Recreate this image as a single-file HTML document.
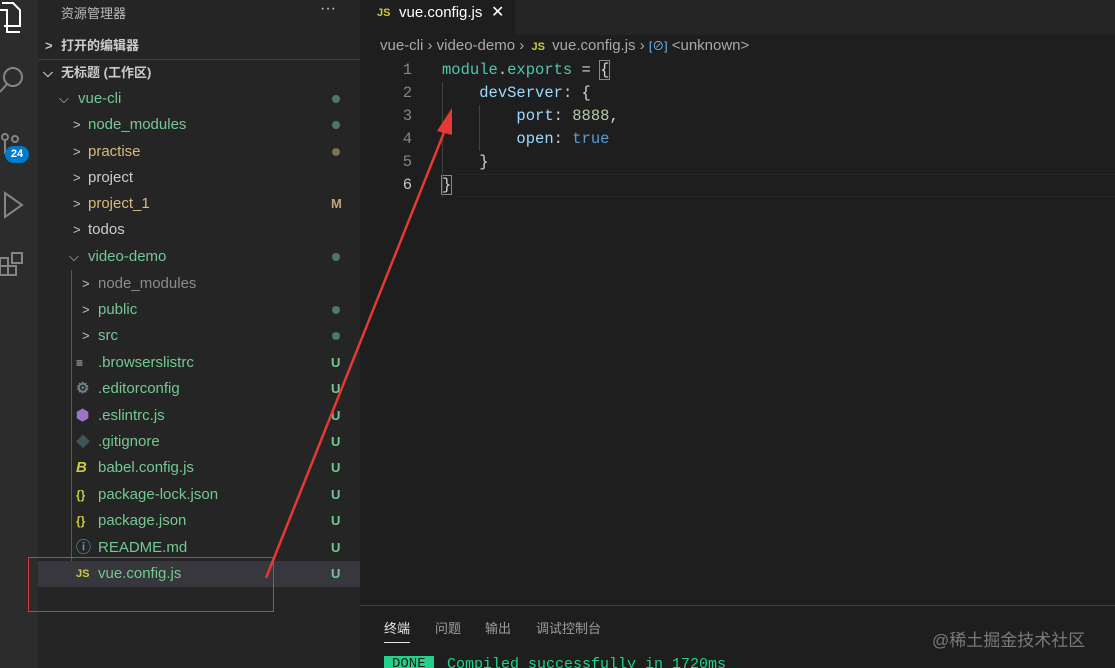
<!DOCTYPE html><html><head><meta charset="utf-8"><style>
*{margin:0;padding:0;box-sizing:border-box}
html,body{width:1115px;height:668px;overflow:hidden}
body{background:#1e1e1e;font-family:"Liberation Sans","Noto Sans CJK SC",sans-serif;position:relative}
.act{position:absolute;left:0;top:0;width:38px;height:668px;background:#2c2c2c}
.side{position:absolute;left:38px;top:0;width:322px;height:668px;background:#252526;color:#ccc}
.row{position:absolute;left:0;width:322px;height:26px;font-size:15px;line-height:26px;white-space:nowrap}
.row span.n{position:absolute}
.chev{position:absolute;font-size:13px;color:#c5c5c5}
.g{color:#73c991}.y{color:#d7ba7d}.w{color:#ccc}.gr{color:#8c8c8c}
.dot{position:absolute;left:294px;top:9px;width:8px;height:8px;border-radius:50%;background:#4b7a5f}
.st{position:absolute;left:293px;font-size:13px;font-weight:bold;color:#73c991}
.ic{position:absolute;left:38px;font-size:12px;font-weight:bold}
.tabs{position:absolute;left:360px;top:0;width:755px;height:35px;background:#252526}
.tab{position:absolute;left:0;top:0;width:155px;height:35px;background:#1e1e1e;color:#fff;font-size:15px;line-height:26px}
.code{position:absolute;left:360px;top:59px;font-family:"Liberation Mono",monospace;font-size:15.5px;line-height:23px}
.ln{position:absolute;left:36px;width:16px;color:#858585;text-align:right}
.cl{position:absolute;left:82px;white-space:pre;color:#d4d4d4}
.panel{position:absolute;left:360px;top:605px;width:755px;height:63px;border-top:1px solid #414141;background:#1e1e1e;overflow:hidden}
</style></head><body>
<div class="act">
<svg width="38" height="300" style="position:absolute;left:0;top:0" fill="none" stroke-width="2">
<path d="M2 3h11l7 7v16h-16" stroke="#fff"/><path d="M0 10h7v22h13" stroke="#fff"/>
<circle cx="13" cy="77" r="9" stroke="#858585"/><path d="M7 84l-7 8" stroke="#858585"/>
<circle cx="5" cy="137" r="3" stroke="#858585"/><circle cx="15" cy="139" r="3" stroke="#858585"/><path d="M5 140v14" stroke="#858585"/>
<path d="M5 193l17 12-17 12z" stroke="#858585"/>
<path d="M0 258h8v8h-8zM0 266h8v9h-8zM8 266h8v9h-8zM12 253h10v10h-10z" stroke="#858585"/>
</svg>
<div style="position:absolute;left:5px;top:146px;width:24px;height:17px;border-radius:9px;background:#007acc;color:#fff;font-size:11px;font-weight:bold;text-align:center;line-height:17px">24</div>
</div>
<div class="side">
<div style="position:absolute;left:23px;top:3px;font-size:13px;color:#bbb">资源管理器</div>
<div style="position:absolute;left:282px;top:0;font-size:16px;color:#ccc">···</div>
<div class="row" style="top:33px;font-weight:bold;font-size:13px"><span class="chev" style="left:7px">&gt;</span><span class="n" style="left:23px">打开的编辑器</span></div>
<div style="position:absolute;left:0;top:59px;width:322px;height:1px;background:#3c3c3c"></div>
<div class="row" style="top:60px;font-weight:bold;font-size:13px"><span class="chev" style="left:5px">⌵</span><span class="n" style="left:23px">无标题 (工作区)</span></div>
<div class="row" style="top:86px"><span class="chev" style="left:21px">⌵</span><span class="n g" style="left:40px">vue-cli</span><i class="dot"></i></div>
<div class="row" style="top:112px"><span class="chev" style="left:35px">&gt;</span><span class="n g" style="left:50px">node_modules</span><i class="dot"></i></div>
<div class="row" style="top:139px"><span class="chev" style="left:35px">&gt;</span><span class="n y" style="left:50px">practise</span><i class="dot" style="background:#7d6f52"></i></div>
<div class="row" style="top:165px"><span class="chev" style="left:35px">&gt;</span><span class="n w" style="left:50px">project</span></div>
<div class="row" style="top:191px"><span class="chev" style="left:35px">&gt;</span><span class="n y" style="left:50px">project_1</span><span class="st" style="color:#c0a57a">M</span></div>
<div class="row" style="top:217px"><span class="chev" style="left:35px">&gt;</span><span class="n w" style="left:50px">todos</span></div>
<div class="row" style="top:244px"><span class="chev" style="left:31px">⌵</span><span class="n g" style="left:50px">video-demo</span><i class="dot"></i></div>
<div style="position:absolute;left:33px;top:270px;width:1px;height:317px;background:#585858"></div>
<div class="row" style="top:271px"><span class="chev" style="left:44px">&gt;</span><span class="n gr" style="left:60px">node_modules</span></div>
<div class="row" style="top:297px"><span class="chev" style="left:44px">&gt;</span><span class="n g" style="left:60px">public</span><i class="dot"></i></div>
<div class="row" style="top:323px"><span class="chev" style="left:44px">&gt;</span><span class="n g" style="left:60px">src</span><i class="dot"></i></div>
<div class="row" style="top:350px"><span class="ic" style="color:#ccc">≡</span><span class="n g" style="left:60px">.browserslistrc</span><span class="st">U</span></div>
<div class="row" style="top:376px"><span class="ic" style="color:#6d8086;font-size:15px">⚙</span><span class="n g" style="left:60px">.editorconfig</span><span class="st">U</span></div>
<div class="row" style="top:403px"><span class="ic" style="color:#a074c4;font-size:15px">⬢</span><span class="n g" style="left:60px">.eslintrc.js</span><span class="st">U</span></div>
<div class="row" style="top:429px"><span class="ic" style="color:#41535b;font-size:14px">◆</span><span class="n g" style="left:60px">.gitignore</span><span class="st">U</span></div>
<div class="row" style="top:455px"><span class="ic" style="color:#cbcb41;font-style:italic;font-size:15px">B</span><span class="n g" style="left:60px">babel.config.js</span><span class="st">U</span></div>
<div class="row" style="top:482px"><span class="ic" style="color:#cbcb41">{}</span><span class="n g" style="left:60px">package-lock.json</span><span class="st">U</span></div>
<div class="row" style="top:508px"><span class="ic" style="color:#cbcb41">{}</span><span class="n g" style="left:60px">package.json</span><span class="st">U</span></div>
<div class="row" style="top:535px"><span class="ic" style="color:#519aba;font-size:15px">ⓘ</span><span class="n g" style="left:60px">README.md</span><span class="st">U</span></div>
<div class="row" style="top:561px;background:#37373d"><span class="ic" style="color:#cbcb41;font-size:11px">JS</span><span class="n g" style="left:60px">vue.config.js</span><span class="st">U</span></div>
</div>
<div class="tabs"><div class="tab"><span style="position:absolute;left:17px;color:#cbcb41;font-size:11px;font-weight:bold">JS</span><span style="position:absolute;left:39px">vue.config.js</span><span style="position:absolute;left:131px;font-size:16px">✕</span></div></div>
<div style="position:absolute;left:380px;top:37px;font-size:15px;color:#a9a9a9;white-space:nowrap">vue-cli <span>›</span> video-demo <span>›</span> <span style="color:#cbcb41;font-size:11px;font-weight:bold">&nbsp;JS&nbsp;</span> vue.config.js › <span style="color:#75beff;font-size:12px">[⊘]</span> &lt;unknown&gt;</div>
<div class="code">
<div class="ln" style="top:0">1</div><div class="ln" style="top:23px">2</div><div class="ln" style="top:46px">3</div><div class="ln" style="top:69px">4</div><div class="ln" style="top:92px">5</div><div class="ln" style="top:115px;color:#c6c6c6">6</div>
<div class="cl" style="top:0"><span style="color:#4ec9b0">module</span>.<span style="color:#4ec9b0">exports</span> = <span style="outline:1px solid #888">{</span></div>
<div class="cl" style="top:23px">    <span style="color:#9cdcfe">devServer</span>: {</div>
<div class="cl" style="top:46px">        <span style="color:#9cdcfe">port</span>: <span style="color:#b5cea8">8888</span>,</div>
<div class="cl" style="top:69px">        <span style="color:#9cdcfe">open</span>: <span style="color:#569cd6">true</span></div>
<div class="cl" style="top:92px">    }</div>
<div class="cl" style="top:115px"><span style="outline:1px solid #888">}</span></div>
<div style="position:absolute;left:82px;top:23px;width:1px;height:115px;background:#404040"></div>
<div style="position:absolute;left:119px;top:46px;width:1px;height:46px;background:#404040"></div>
<div style="position:absolute;left:97px;top:115px;width:660px;height:23px;border-top:1px solid #282828;border-bottom:1px solid #282828"></div>
</div>
<div class="panel">
<div style="position:absolute;left:24px;top:12px;font-size:13px;color:#e7e7e7">终端</div>
<div style="position:absolute;left:24px;top:36px;width:26px;height:1px;background:#e7e7e7"></div>
<div style="position:absolute;left:75px;top:12px;font-size:13px;color:#9d9d9d">问题</div>
<div style="position:absolute;left:125px;top:12px;font-size:13px;color:#9d9d9d">输出</div>
<div style="position:absolute;left:176px;top:12px;font-size:13px;color:#9d9d9d">调试控制台</div>
<div style="position:absolute;left:572px;top:20px;font-size:17px;color:#7a7a7a">@稀土掘金技术社区</div>
<div style="position:absolute;left:24px;top:50px;width:50px;height:20px;background:#23d18b;color:#1e1e1e;font-family:'Liberation Mono',monospace;font-size:14px;padding-left:8px">DONE</div>
<div style="position:absolute;left:87px;top:50px;color:#23d18b;font-family:'Liberation Mono',monospace;font-size:15px">Compiled successfully in 1720ms</div>
</div>
<svg width="1115" height="668" style="position:absolute;left:0;top:0">
<rect x="28.5" y="557.5" width="245" height="54" fill="none" stroke="#d9383a" stroke-width="1"/>
<path d="M266 578L445 130" stroke="#e53935" stroke-width="2.5"/>
<path d="M452 108L437 131L452 135z" fill="#e53935"/>
</svg>
</body></html>
